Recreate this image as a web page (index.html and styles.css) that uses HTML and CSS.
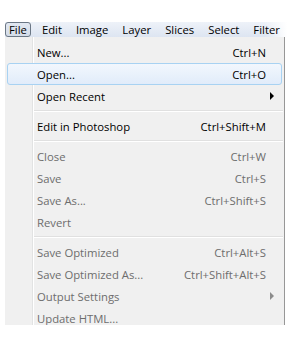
FILE: index.html
```html
<!DOCTYPE html>
<html lang="en">
<head>
  <meta charset="UTF-8" />
  <title>File Menu</title>
  <link rel="stylesheet" href="styles.css">
</head>
<body>
  <div class="window">
    <div class="menubar">
      <span class="bar-item active">File</span>
      <span class="bar-item">Edit</span>
      <span class="bar-item">Image</span>
      <span class="bar-item">Layer</span>
      <span class="bar-item">Slices</span>
      <span class="bar-item">Select</span>
      <span class="bar-item">Filter</span>
    </div>

    <div class="menu">
      <div class="item"><span class="label">New...</span><span class="keys">Ctrl+N</span></div>
      <div class="item hover"><span class="label">Open...</span><span class="keys">Ctrl+O</span></div>
      <div class="item"><span class="label">Open Recent</span><span class="arrow"></span></div>
      <div class="sep"></div>
      <div class="item"><span class="label">Edit in Photoshop</span><span class="keys">Ctrl+Shift+M</span></div>
      <div class="sep"></div>
      <div class="item off"><span class="label">Close</span><span class="keys">Ctrl+W</span></div>
      <div class="item off"><span class="label">Save</span><span class="keys">Ctrl+S</span></div>
      <div class="item off"><span class="label">Save As...</span><span class="keys">Ctrl+Shift+S</span></div>
      <div class="item off"><span class="label">Revert</span></div>
      <div class="sep"></div>
      <div class="item off"><span class="label">Save Optimized</span><span class="keys">Ctrl+Alt+S</span></div>
      <div class="item off"><span class="label">Save Optimized As...</span><span class="keys">Ctrl+Shift+Alt+S</span></div>
      <div class="item off"><span class="label">Output Settings</span><span class="arrow"></span></div>
      <div class="item off"><span class="label">Update HTML...</span></div>
    </div>
  </div>
</body>
</html>
```

FILE: styles.css
```css
body {
  margin: 0;
  background: #fff;
  font-family: "Open Sans", "Noto Sans", sans-serif;
  font-size: 11.3px;
  color: #000;
}
.window {
  padding: 22px 0 0 5px;
  width: 282px;
}
.menubar {
  display: flex;
  height: 15px;
  align-items: center;
  background: linear-gradient(to right, rgba(255,255,255,0) 92%, #fff 100%),
              linear-gradient(#eef2f9, #dde5f1);
}
.bar-item {
  padding: 0 6px;
  line-height: 13px;
  border: 1px solid transparent;
}
.bar-item.active {
  border-color: #6b7785;
  border-radius: 3px;
  background: linear-gradient(#e2e8f1, #d4dce8);
  padding: 0 3px;
  margin-right: 4px;
}
.menu {
  position: relative;
  width: 280px;
  height: 288px;
  overflow: hidden;
  background: #f0f0f0;
  border-right: 1px solid #979797;
  padding-top: 4px;
  box-sizing: border-box;
}
.menu::before {
  content: "";
  position: absolute;
  left: 27px;
  top: 0;
  bottom: 0;
  width: 1px;
  background: #e2e3e3;
  border-right: 1px solid #fff;
}
.item {
  position: relative;
  display: flex;
  align-items: center;
  height: 22px;
  padding: 0 15px 0 29px;
  margin: 0 2px;
  border: 1px solid transparent;
  border-radius: 3px;
  box-sizing: border-box;
}
.item.hover {
  border-color: #a8d2f2;
  background: linear-gradient(#f2f7fd, #e1ecfa);
}
.label {
  flex: 1;
}
.keys {
  text-align: right;
}
.off {
  color: #6d6d6d;
}
.arrow {
  width: 0;
  height: 0;
  margin-right: -8px;
  border-left: 4px solid #000;
  border-top: 4px solid transparent;
  border-bottom: 4px solid transparent;
}
.off .arrow {
  border-left-color: #8c8c8c;
}
.sep {
  position: relative;
  height: 8px;
  margin-left: 29px;
  margin-right: 1px;
}
.sep::after {
  content: "";
  position: absolute;
  left: 0;
  right: 0;
  top: 3px;
  height: 1px;
  background: #e0e0e0;
  border-bottom: 1px solid #fff;
}
```
